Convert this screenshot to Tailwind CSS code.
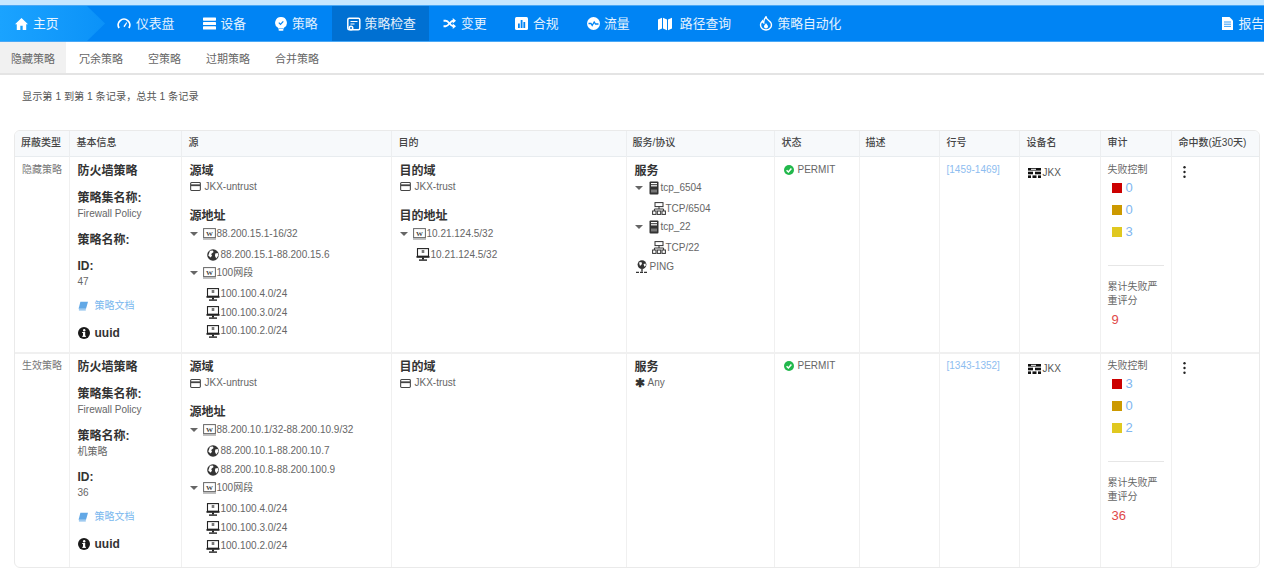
<!DOCTYPE html>
<html lang="zh-CN">
<head>
    <meta charset="UTF-8">
    <title>策略检查</title>
    <script src="https://cdn.jsdelivr.net/npm/@tailwindcss/browser@4"></script>
</head>
<body class="h-[568px] w-[1264px] overflow-hidden bg-white text-[10px] leading-4 text-[#666] font-['Liberation_Sans','Noto_Sans_CJK_SC',sans-serif]">
    <!-- shared icons -->
    <svg class="hidden">
        <symbol id="i-zone" viewBox="0 0 12 10"><rect x=".6" y=".6" width="10.8" height="8.8" rx="1" fill="none" stroke="#444" stroke-width="1.2"/><rect x="1" y="2.6" width="10" height="2" fill="#444"/></symbol>
        <symbol id="i-w" viewBox="0 0 13 12"><rect x=".6" y=".6" width="11.8" height="9" fill="#fff" stroke="#666" stroke-width="1"/><rect x="0" y="10.4" width="13" height="1.2" fill="#999"/><text x="6.5" y="7.8" text-anchor="middle" font-size="7" font-weight="700" font-family="Liberation Serif" fill="#444">W</text></symbol>
        <symbol id="i-globe" viewBox="0 0 12 12"><circle cx="6" cy="6" r="5.8" fill="#333"/><path d="M3 1.800 5.800 1.400 6.600 3 4.200 5 5 6.800 3.600 8.400 1.300 6.500z" fill="#fff"/><path d="m8.200 4.500 2.600-.5.500 2.500-2 3-1.300-2.400z" fill="#fff"/></symbol>
        <symbol id="i-pc" viewBox="0 0 14 13"><rect x="1.5" y=".6" width="11" height="7.6" fill="#fff" stroke="#222" stroke-width="1.1"/><rect x="5.7" y="2" width="2.6" height="3" fill="#777"/><rect x=".5" y="8" width="13" height="1.8" fill="#222"/><rect x="6" y="9.5" width="2" height="2" fill="#222"/><rect x="3" y="11.4" width="8" height="1.4" fill="#222"/></symbol>
        <symbol id="i-svc" viewBox="0 0 10 14"><rect x=".5" y=".5" width="9" height="13" rx="1" fill="#333"/><rect x="2" y="2" width="6" height="1.2" fill="#fff"/><rect x="2" y="4.2" width="6" height="1.2" fill="#fff"/><rect x="2" y="8.5" width="6" height="3" fill="#777"/></symbol>
        <symbol id="i-net" viewBox="0 0 14 13"><rect x="3" y=".6" width="8" height="4" fill="#fff" stroke="#333"/><path d="M7 4.6v2.4M2.4 9V7h9.2v2" fill="none" stroke="#333"/><rect x=".6" y="9" width="3.4" height="3.4" fill="#fff" stroke="#333"/><rect x="5.3" y="9" width="3.4" height="3.4" fill="#fff" stroke="#333"/><rect x="10" y="9" width="3.4" height="3.4" fill="#fff" stroke="#333"/></symbol>
        <symbol id="i-ping" viewBox="0 0 14 14"><circle cx="7" cy="4.6" r="4.4" fill="#333"/><path d="M4 2.6 6.4 2 7 4 5 6zM8.6 4l2-.4.3 2-1.6 1.2z" fill="#fff"/><path d="M7 9v2.4M1 12.4h12" stroke="#333" stroke-width="1.4" stroke-dasharray="3 1"/></symbol>
        <symbol id="i-book" viewBox="0 0 10 10"><path d="M2.400 .8H10L8 7.800H.6z" fill="#62a8e6"/><path d="M.9 8.900H7.800" stroke="#62a8e6" stroke-width="1"/></symbol>
        <symbol id="i-info" viewBox="0 0 12 12"><circle cx="6" cy="6" r="6" fill="#1a1a1a"/><rect x="5" y="5" width="2.2" height="4.6" fill="#fff"/><rect x="4.2" y="5" width="2" height="1" fill="#fff"/><rect x="4.2" y="8.8" width="3.8" height="1" fill="#fff"/><circle cx="6.2" cy="3.2" r="1.2" fill="#fff"/></symbol>
        <symbol id="i-ok" viewBox="0 0 10 10"><circle cx="5" cy="5" r="5" fill="#22b84c"/><path d="M2.6 5.2 4.4 7l3-3.4" fill="none" stroke="#fff" stroke-width="1.5"/></symbol>
        <symbol id="i-dev" viewBox="0 0 13 10"><rect width="13" height="2.6" fill="#111"/><rect x="3" y=".8" width="5" height="1" fill="#fff"/><rect y="3.7" width="5" height="2.6" fill="#111"/><rect x="7" y="3.7" width="6" height="2.6" fill="#111"/><rect y="7.4" width="3" height="2.6" fill="#111"/><rect x="4.5" y="7.4" width="4" height="2.6" fill="#111"/><rect x="10" y="7.4" width="3" height="2.6" fill="#111"/></symbol>
        <symbol id="i-caret" viewBox="0 0 8 4"><path d="M0 0h8L4 4z" fill="#666"/></symbol>
        <symbol id="i-more" viewBox="0 0 3 12"><circle cx="1.5" cy="1.3" r="1.2" fill="#222"/><circle cx="1.5" cy="6" r="1.2" fill="#222"/><circle cx="1.5" cy="10.7" r="1.2" fill="#222"/></symbol>
    </svg>

    <!-- Top nav -->
    <div class="h-[5px] bg-[#c6e7ff]"></div>
    <header class="flex h-[37px] items-center border-y border-[#4aa8f5] bg-[#0084f4] text-[12.8px] text-white/90">
        <a class="flex h-full w-[105px] shrink-0 items-center bg-gradient-to-r from-[#1aa3ff] to-[#0b92f8] pl-[15px] [clip-path:polygon(0_0,87px_0,105px_50%,87px_100%,0_100%)]">
            <svg class="mr-[5px] h-[14px] w-[13px]" viewBox="1 2 22 20"><path d="M12 2 1 12.500h3V22h6v-7h4v7h6v-9.500h3z" fill="#fff"/></svg>主页
        </a>
        <a class="-ml-[2.5px] flex h-full items-center px-[14.5px]">
            <svg class="mr-[5px] h-[14px] w-[14px]" viewBox="0 0 24 24"><path d="M3.500 19A10 10 0 1 1 20.500 19" fill="none" stroke="#fff" stroke-width="3"/><path d="m11 16 5-7 1.500 1-4.500 7.500z" fill="#fff"/></svg>仪表盘
        </a>
        <a class="flex h-full items-center px-[14.5px]">
            <svg class="mr-[4px] h-[13px] w-[13px]" viewBox="0 0 13 13"><rect y=".5" width="13" height="3.200" rx=".6" fill="#fff"/><rect y="4.900" width="13" height="3.200" rx=".6" fill="#fff"/><rect y="9.300" width="13" height="3.200" rx=".6" fill="#fff"/></svg>设备
        </a>
        <a class="flex h-full items-center px-[14.5px]">
            <svg class="mr-[5px] h-[14px] w-[12px]" viewBox="0 0 12 14"><path d="M6 0a5.800 5.800 0 0 1 3 10.800V11.500H3v-.7A5.800 5.800 0 0 1 6 0z" fill="#fff"/><rect x="3.500" y="12" width="5" height="1.800" rx=".8" fill="#fff"/><path d="m3.800 5.600 1.700 1.700 2.800-3" fill="none" stroke="#0084f4" stroke-width="1.200"/></svg>策略
        </a>
        <a class="flex h-full items-center bg-[#0070d2] pr-[13px] pl-[14.5px]">
            <svg class="mr-[4px] h-[14px] w-[14px]" viewBox="0 0 14 14"><rect x=".8" y="1.300" width="12" height="11.500" rx="1.500" fill="none" stroke="#fff" stroke-width="1.500"/><path d="M3.500 4.500h7M3.500 7h4" stroke="#fff" stroke-width="1.200"/><circle cx="4" cy="11" r="2.500" fill="#fff"/><circle cx="4" cy="11" r="1" fill="#0070d2"/></svg>策略检查
        </a>
        <a class="flex h-full items-center px-[14.2px]">
            <svg class="mr-[5px] h-[13px] w-[13px]" viewBox="0 0 24 24"><path d="M1 7h4c6 0 8 10 14 10h2M1 17h4c6 0 8-10 14-10h2" fill="none" stroke="#fff" stroke-width="3.500"/><path d="m18 2 6 5-6 5zM18 12l6 5-6 5z" fill="#fff"/></svg>变更
        </a>
        <a class="flex h-full items-center px-[14.2px]">
            <svg class="mr-[5px] h-[13px] w-[13px]" viewBox="0 0 13 13"><rect width="13" height="13" rx="1.500" fill="#fff"/><path d="M3 6.500h1.800V11H3zM5.700 3h1.800v8H5.700zM8.400 5h1.800v6H8.400z" fill="#0084f4"/></svg>合规
        </a>
        <a class="flex h-full items-center px-[14.2px]">
            <svg class="mr-[4px] h-[13px] w-[13px]" viewBox="0 0 13 13"><circle cx="6.500" cy="6.500" r="6.500" fill="#fff"/><path d="M1.500 6.500h2.500l1.200 2 2-3.500 1.300 2h3" fill="none" stroke="#0084f4" stroke-width="1.300"/></svg>流量
        </a>
        <a class="flex h-full items-center px-[14.2px]">
            <svg class="mr-[8px] h-[14px] w-[14px]" viewBox="0 0 14 14"><path d="M0 2.500 4 .8v10.700L0 13.200zM5 .8l4 1.700v10.700l-4-1.700zM10 2.500 14 .8v10.700l-4 1.700z" fill="#fff"/></svg>路径查询
        </a>
        <a class="flex h-full items-center px-[14.2px]">
            <svg class="mr-[4px] h-[15px] w-[14px]" viewBox="0 0 14 15"><path d="M7 .8c.5 3 4 4.200 5 6.200 1.400 3-.8 7-5 7S.6 10 2 7c.4-.9 1-1.400 1.500-2 .2 1 .6 1.600 1.200 2C4.600 4.500 5.500 2.500 7 .8z" fill="none" stroke="#fff" stroke-width="1.400"/><path d="M7 7c.3 1.200 2 2 2 3.500a2 2 0 0 1-4 0C5 9.200 6.500 8.500 7 7z" fill="#fff"/></svg>策略自动化
        </a>
        <a class="ml-auto flex h-full items-center">
            <svg class="mr-[5px] h-[13px] w-[11px]" viewBox="0 0 11 13"><path d="M0 0h7.500L11 3.500V13H0z" fill="#fff"/><path d="M2 5h7M2 7.200h7M2 9.400h7" stroke="#0084f4" stroke-width=".8"/></svg>报告
        </a>
    </header>

    <!-- Sub tabs -->
    <nav class="flex h-[33px] items-center gap-px border-b-2 border-[#e4e4e4] text-[11px] text-[#666]">
        <a class="flex h-full items-center bg-[#f1f1f1] px-[11px] pt-[2px]">隐藏策略</a>
        <a class="px-3 pt-[2px]">冗余策略</a>
        <a class="px-3 pt-[2px]">空策略</a>
        <a class="px-3 pt-[2px]">过期策略</a>
        <a class="px-3 pt-[2px]">合并策略</a>
    </nav>

    <p class="mt-[14px] ml-[22px] text-[10.2px] text-[#555]">显示第 1 到第 1 条记录，总共 1 条记录</p>

    <!-- Result table -->
    <div class="mt-[25px] ml-[14px] h-[438px] w-[1246px] overflow-hidden rounded-md border border-[#eaeaea]">
        <table class="w-full table-fixed border-collapse">
            <colgroup>
                <col class="w-[54px]"><col class="w-[112px]"><col class="w-[210px]"><col class="w-[235px]"><col class="w-[148px]"><col class="w-[85px]"><col class="w-[80px]"><col class="w-[80px]"><col class="w-[81px]"><col class="w-[71px]"><col class="w-[88px]">
            </colgroup>
            <thead>
                <tr class="h-[25px] border-b border-[#e8ecef] bg-[#f7f9fb] text-left text-[10px] font-bold text-[#444]">
                    <th class="border-r border-[#eceef0] pl-[6px] font-medium">屏蔽类型</th>
                    <th class="border-r border-[#eceef0] pl-[7px] font-medium">基本信息</th>
                    <th class="border-r border-[#eceef0] pl-[7px] font-medium">源</th>
                    <th class="border-r border-[#eceef0] pl-[7px] font-medium">目的</th>
                    <th class="border-r border-[#eceef0] pl-[6px] font-medium">服务/协议</th>
                    <th class="border-r border-[#eceef0] pl-[7px] font-medium">状态</th>
                    <th class="border-r border-[#eceef0] pl-[6px] font-medium">描述</th>
                    <th class="border-r border-[#eceef0] pl-[7px] font-medium">行号</th>
                    <th class="border-r border-[#eceef0] pl-[7px] font-medium">设备名</th>
                    <th class="border-r border-[#eceef0] pl-[7px] font-medium">审计</th>
                    <th class="pl-[7px] font-medium">命中数(近30天)</th>
                </tr>
            </thead>
            <tbody>
                <!-- Row 1 -->
                <tr class="h-[197px] border-b-2 border-[#f0f0f0] align-top">
                    <td class="border-r border-[#f0f0f0] pt-[5px] pl-[7px] text-[#777]">隐藏策略</td>
                    <td class="border-r border-[#f0f0f0] pt-[6px] pl-[8px]">
                        <h4 class="mb-[11px] text-[12px] font-bold text-[#333]">防火墙策略</h4>
                        <h4 class="text-[12px] font-bold text-[#333]">策略集名称:</h4>
                        <p class="mb-[10px]">Firewall Policy</p>
                        <h4 class="mb-[10px] text-[12px] font-bold text-[#333]">策略名称:</h4>
                        <h4 class="text-[12px] font-bold text-[#333]">ID:</h4>
                        <p class="mb-2">47</p>
                        <a class="flex items-center text-[#7ab8ee]"><svg class="mr-[7px] h-[10px] w-[10px]"><use href="#i-book"/></svg>策略文档</a>
                        <p class="mt-[11px] flex items-center text-[12px] font-bold text-[#333]"><svg class="mr-[5px] h-3 w-3"><use href="#i-info"/></svg>uuid</p>
                    </td>
                    <td class="border-r border-[#f0f0f0] pt-[6px] pl-[8px]">
                        <h4 class="text-[12px] font-bold text-[#333]">源域</h4>
                        <p class="flex items-center"><svg class="mr-[4px] h-[9px] w-[11px]"><use href="#i-zone"/></svg>JKX-untrust</p>
                        <h4 class="mt-[13px] text-[12px] font-bold text-[#333]">源地址</h4>
                        <div class="mt-[1px]">
                            <p class="flex h-[18px] items-center"><svg class="mr-[5px] h-1 w-2"><use href="#i-caret"/></svg><svg class="mr-px h-3 w-[13px]"><use href="#i-w"/></svg>88.200.15.1-16/32</p>
                            <p class="mt-[3px] flex h-[18.5px] items-center pl-[17px]"><svg class="mr-[2px] h-3 w-3"><use href="#i-globe"/></svg>88.200.15.1-88.200.15.6</p>
                            <p class="flex h-[18px] items-center"><svg class="mr-[5px] h-1 w-2"><use href="#i-caret"/></svg><svg class="mr-px h-3 w-[13px]"><use href="#i-w"/></svg>100网段</p>
                            <p class="mt-[3px] flex h-[18.5px] items-center pl-[16px]"><svg class="mr-px h-[13px] w-[14px]"><use href="#i-pc"/></svg>100.100.4.0/24</p>
                            <p class="flex h-[18.5px] items-center pl-[16px]"><svg class="mr-px h-[13px] w-[14px]"><use href="#i-pc"/></svg>100.100.3.0/24</p>
                            <p class="flex h-[18.5px] items-center pl-[16px]"><svg class="mr-px h-[13px] w-[14px]"><use href="#i-pc"/></svg>100.100.2.0/24</p>
                        </div>
                    </td>
                    <td class="border-r border-[#f0f0f0] pt-[6px] pl-[8px]">
                        <h4 class="text-[12px] font-bold text-[#333]">目的域</h4>
                        <p class="flex items-center"><svg class="mr-[4px] h-[9px] w-[11px]"><use href="#i-zone"/></svg>JKX-trust</p>
                        <h4 class="mt-[13px] text-[12px] font-bold text-[#333]">目的地址</h4>
                        <div class="mt-[1px]">
                            <p class="flex h-[18px] items-center"><svg class="mr-[5px] h-1 w-2"><use href="#i-caret"/></svg><svg class="mr-px h-3 w-[13px]"><use href="#i-w"/></svg>10.21.124.5/32</p>
                            <p class="mt-[3px] flex h-[18.5px] items-center pl-[16px]"><svg class="mr-px h-[13px] w-[14px]"><use href="#i-pc"/></svg>10.21.124.5/32</p>
                        </div>
                    </td>
                    <td class="border-r border-[#f0f0f0] pt-[6px] pl-[8px]">
                        <h4 class="text-[12px] font-bold text-[#333]">服务</h4>
                        <div>
                            <p class="flex h-[18px] items-center"><svg class="mr-[6px] h-1 w-2"><use href="#i-caret"/></svg><svg class="mr-[2px] h-[14px] w-[10px]"><use href="#i-svc"/></svg>tcp_6504</p>
                            <p class="mt-[3px] flex h-[18.5px] items-center pl-[17px]"><svg class="h-[13px] w-[14px]"><use href="#i-net"/></svg>TCP/6504</p>
                            <p class="flex h-[18.5px] items-center"><svg class="mr-[6px] h-1 w-2"><use href="#i-caret"/></svg><svg class="mr-[2px] h-[14px] w-[10px]"><use href="#i-svc"/></svg>tcp_22</p>
                            <p class="mt-[2px] flex h-[18.5px] items-center pl-[17px]"><svg class="h-[13px] w-[14px]"><use href="#i-net"/></svg>TCP/22</p>
                            <p class="flex h-[20px] items-center"><svg class="mr-px h-[14px] w-[14px]"><use href="#i-ping"/></svg>PING</p>
                        </div>
                    </td>
                    <td class="border-r border-[#f0f0f0] pt-[5px] pl-[9px]"><p class="flex items-center"><svg class="mr-[4px] h-[10px] w-[10px]"><use href="#i-ok"/></svg>PERMIT</p></td>
                    <td class="border-r border-[#f0f0f0]"></td>
                    <td class="border-r border-[#f0f0f0] pt-[5px] pl-[7px] text-[#8dbdf0]">[1459-1469]</td>
                    <td class="border-r border-[#f0f0f0] pt-[8px] pl-[8px]"><p class="flex items-center text-[#555]"><svg class="mr-[2px] h-[10px] w-[13px]"><use href="#i-dev"/></svg>JKX</p></td>
                    <td class="border-r border-[#f0f0f0] pt-[5px] pl-[7px]">
                        <p>失败控制</p>
                        <div class="-mt-[1px] pl-[4px] text-[13px] text-[#7fb6f0]">
                            <p class="flex h-[22px] items-center"><i class="mr-[4px] size-[10px] bg-[#cc0000]"></i>0</p>
                            <p class="flex h-[22px] items-center"><i class="mr-[4px] size-[10px] bg-[#cc9900]"></i>0</p>
                            <p class="flex h-[22px] items-center"><i class="mr-[4px] size-[10px] bg-[#e0c820]"></i>3</p>
                        </div>
                        <div class="mt-[22px] mr-[7px] border-t border-[#e6e6e6]"></div>
                        <p class="mt-[14px] mr-[5px] leading-[14px]">累计失败严重评分</p>
                        <p class="mt-[4px] pl-[4px] text-[13px] text-[#e04848]">9</p>
                    </td>
                    <td class="pt-[9px] pl-[11px]"><svg class="h-3 w-[3px]"><use href="#i-more"/></svg></td>
                </tr>
                <!-- Row 2 -->
                <tr class="h-[214px] align-top">
                    <td class="border-r border-[#f0f0f0] pt-[4px] pl-[7px] text-[#777]">生效策略</td>
                    <td class="border-r border-[#f0f0f0] pt-[5px] pl-[8px]">
                        <h4 class="mb-[11px] text-[12px] font-bold text-[#333]">防火墙策略</h4>
                        <h4 class="text-[12px] font-bold text-[#333]">策略集名称:</h4>
                        <p class="mb-[10px]">Firewall Policy</p>
                        <h4 class="text-[12px] font-bold text-[#333]">策略名称:</h4>
                        <p class="mb-[9px]">机策略</p>
                        <h4 class="text-[12px] font-bold text-[#333]">ID:</h4>
                        <p class="mb-2">36</p>
                        <a class="flex items-center text-[#7ab8ee]"><svg class="mr-[7px] h-[10px] w-[10px]"><use href="#i-book"/></svg>策略文档</a>
                        <p class="mt-[11px] flex items-center text-[12px] font-bold text-[#333]"><svg class="mr-[5px] h-3 w-3"><use href="#i-info"/></svg>uuid</p>
                    </td>
                    <td class="border-r border-[#f0f0f0] pt-[5px] pl-[8px]">
                        <h4 class="text-[12px] font-bold text-[#333]">源域</h4>
                        <p class="flex items-center"><svg class="mr-[4px] h-[9px] w-[11px]"><use href="#i-zone"/></svg>JKX-untrust</p>
                        <h4 class="mt-[13px] text-[12px] font-bold text-[#333]">源地址</h4>
                        <div class="mt-[1px]">
                            <p class="flex h-[18px] items-center"><svg class="mr-[5px] h-1 w-2"><use href="#i-caret"/></svg><svg class="mr-px h-3 w-[13px]"><use href="#i-w"/></svg>88.200.10.1/32-88.200.10.9/32</p>
                            <p class="mt-[3px] flex h-[18.5px] items-center pl-[17px]"><svg class="mr-[2px] h-3 w-3"><use href="#i-globe"/></svg>88.200.10.1-88.200.10.7</p>
                            <p class="flex h-[18.5px] items-center pl-[17px]"><svg class="mr-[2px] h-3 w-3"><use href="#i-globe"/></svg>88.200.10.8-88.200.100.9</p>
                            <p class="flex h-[18px] items-center"><svg class="mr-[5px] h-1 w-2"><use href="#i-caret"/></svg><svg class="mr-px h-3 w-[13px]"><use href="#i-w"/></svg>100网段</p>
                            <p class="mt-[3px] flex h-[18.5px] items-center pl-[16px]"><svg class="mr-px h-[13px] w-[14px]"><use href="#i-pc"/></svg>100.100.4.0/24</p>
                            <p class="flex h-[18.5px] items-center pl-[16px]"><svg class="mr-px h-[13px] w-[14px]"><use href="#i-pc"/></svg>100.100.3.0/24</p>
                            <p class="flex h-[18.5px] items-center pl-[16px]"><svg class="mr-px h-[13px] w-[14px]"><use href="#i-pc"/></svg>100.100.2.0/24</p>
                        </div>
                    </td>
                    <td class="border-r border-[#f0f0f0] pt-[5px] pl-[8px]">
                        <h4 class="text-[12px] font-bold text-[#333]">目的域</h4>
                        <p class="flex items-center"><svg class="mr-[4px] h-[9px] w-[11px]"><use href="#i-zone"/></svg>JKX-trust</p>
                    </td>
                    <td class="border-r border-[#f0f0f0] pt-[5px] pl-[8px]">
                        <h4 class="text-[12px] font-bold text-[#333]">服务</h4>
                        <p class="flex items-center"><span class="mr-[3px] text-[12px] font-bold text-[#333]">✱</span>Any</p>
                    </td>
                    <td class="border-r border-[#f0f0f0] pt-[4px] pl-[9px]"><p class="flex items-center"><svg class="mr-[4px] h-[10px] w-[10px]"><use href="#i-ok"/></svg>PERMIT</p></td>
                    <td class="border-r border-[#f0f0f0]"></td>
                    <td class="border-r border-[#f0f0f0] pt-[4px] pl-[7px] text-[#8dbdf0]">[1343-1352]</td>
                    <td class="border-r border-[#f0f0f0] pt-[7px] pl-[8px]"><p class="flex items-center text-[#555]"><svg class="mr-[2px] h-[10px] w-[13px]"><use href="#i-dev"/></svg>JKX</p></td>
                    <td class="border-r border-[#f0f0f0] pt-[4px] pl-[7px]">
                        <p>失败控制</p>
                        <div class="-mt-[1px] pl-[4px] text-[13px] text-[#7fb6f0]">
                            <p class="flex h-[22px] items-center"><i class="mr-[4px] size-[10px] bg-[#cc0000]"></i>3</p>
                            <p class="flex h-[22px] items-center"><i class="mr-[4px] size-[10px] bg-[#cc9900]"></i>0</p>
                            <p class="flex h-[22px] items-center"><i class="mr-[4px] size-[10px] bg-[#e0c820]"></i>2</p>
                        </div>
                        <div class="mt-[22px] mr-[7px] border-t border-[#e6e6e6]"></div>
                        <p class="mt-[14px] mr-[5px] leading-[14px]">累计失败严重评分</p>
                        <p class="mt-[4px] pl-[4px] text-[13px] text-[#e04848]">36</p>
                    </td>
                    <td class="pt-[8px] pl-[11px]"><svg class="h-3 w-[3px]"><use href="#i-more"/></svg></td>
                </tr>
            </tbody>
        </table>
    </div>
</body>
</html>
